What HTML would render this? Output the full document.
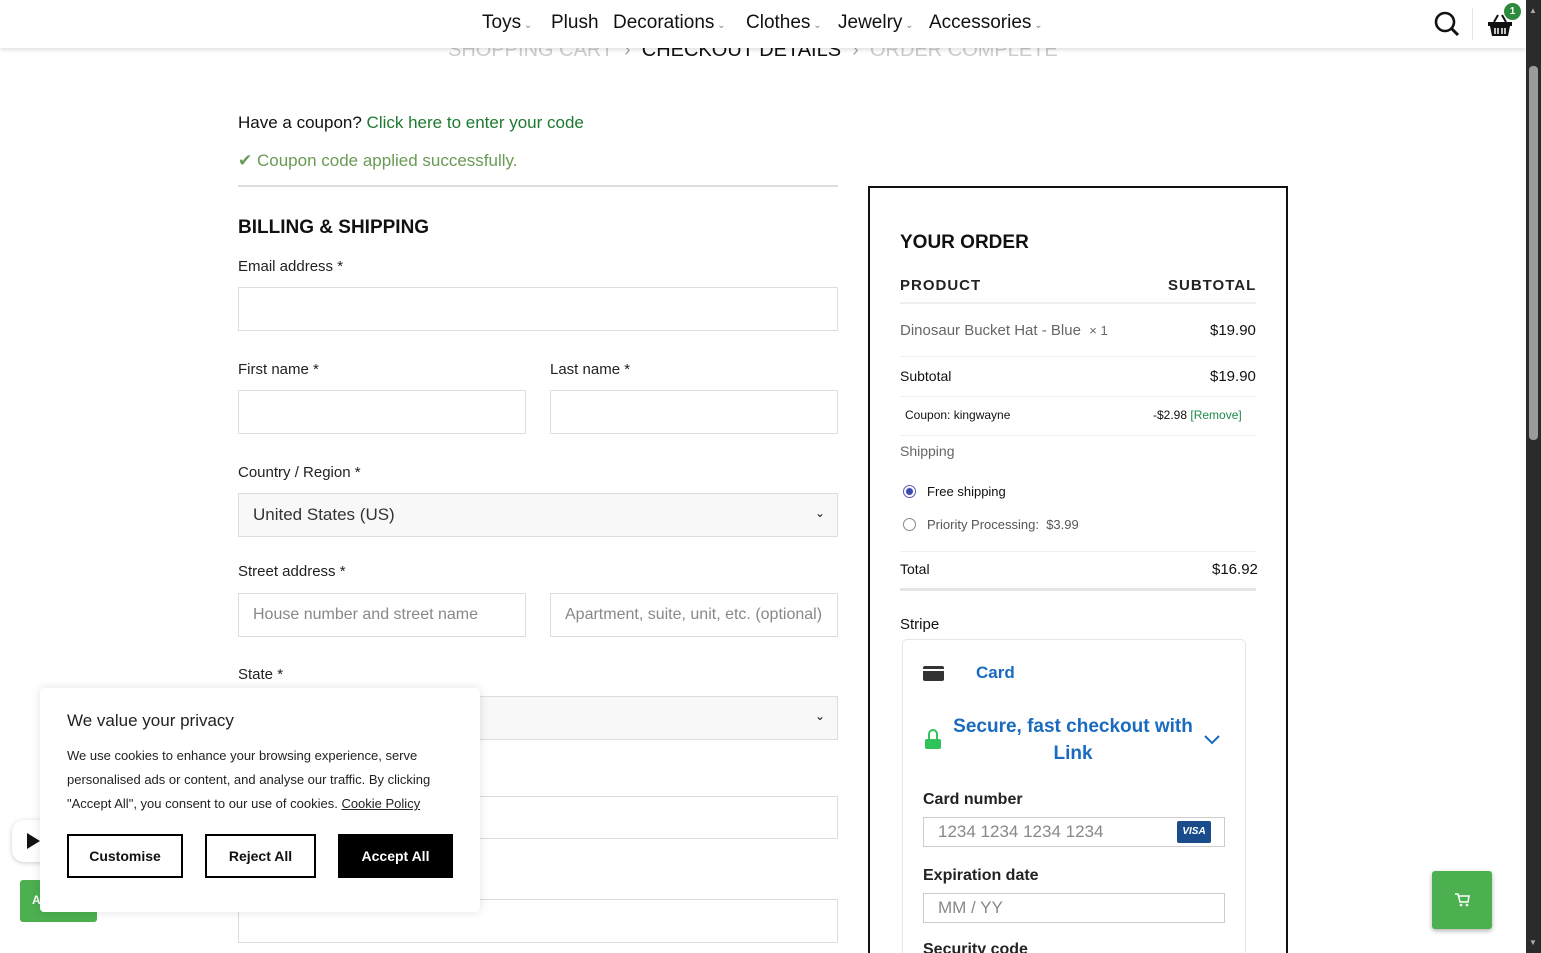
<!DOCTYPE html>
<html style="overflow:hidden;width:1541px;height:953px"><head><meta charset="utf-8"><style>
*{box-sizing:border-box;margin:0;padding:0}
html,body{overflow:hidden}
body{width:1541px;height:953px;overflow:hidden;background:#fff;font-family:"Liberation Sans",sans-serif;color:#111;position:relative}
.a{position:absolute;white-space:nowrap}
.lbl{font-size:15px;color:#222}
.inp{position:absolute;border:1px solid #ddd;background:#fff}
.ph{color:#888;font-size:16px;padding-left:14px;line-height:42px}
.nav{font-size:19px;color:#111}
.car{font-size:10px;color:#888}
.row{position:absolute;left:900px;width:356px;border-bottom:2px solid #eee}
.btn{position:absolute;top:834px;height:44px;border:2px solid #000;font-size:14px;font-weight:bold;text-align:center;line-height:40px}
</style></head><body>
<div class="a" style="left:448px;top:39px;font-size:20px;color:#ccc">SHOPPING CART <span style="color:#aaa">&nbsp;›&nbsp;</span> <span style="color:#111">CHECKOUT DETAILS</span> <span style="color:#aaa">&nbsp;›&nbsp;</span> ORDER COMPLETE</div>
<div class="a" style="left:0;top:0;width:1526px;height:48px;background:#fff;box-shadow:0 2px 4px rgba(0,0,0,.12)"></div>
<div class="a nav" style="left:482px;top:12px">Toys<span class="car"> ⌄</span></div>
<div class="a nav" style="left:551px;top:12px">Plush</div>
<div class="a nav" style="left:613px;top:12px">Decorations<span class="car"> ⌄</span></div>
<div class="a nav" style="left:746px;top:12px">Clothes<span class="car"> ⌄</span></div>
<div class="a nav" style="left:838px;top:12px">Jewelry<span class="car"> ⌄</span></div>
<div class="a nav" style="left:929px;top:12px">Accessories<span class="car"> ⌄</span></div>
<svg class="a" style="left:1433px;top:10px" width="28" height="28" viewBox="0 0 28 28"><circle cx="12" cy="12" r="9" fill="none" stroke="#111" stroke-width="2.6"/><line x1="18.5" y1="18.5" x2="25" y2="25" stroke="#111" stroke-width="3"/></svg>
<div class="a" style="left:1472px;top:8px;width:1px;height:32px;background:#e5e5e5"></div>
<svg class="a" style="left:1487px;top:12px" width="26" height="26" viewBox="0 0 26 26"><path d="M7 10 L11 3 M19 10 L15 3" stroke="#111" stroke-width="2" fill="none"/><rect x="1" y="10" width="24" height="4" fill="#111"/><path d="M3 14 L5 24 H21 L23 14 Z" fill="#111"/><path d="M8 16v6M11 16v6M15 16v6M18 16v6" stroke="#fff" stroke-width="1.5"/></svg>
<div class="a" style="left:1504px;top:3px;width:17px;height:17px;border-radius:50%;background:#2e8b3e;color:#fff;font-size:10px;font-weight:bold;text-align:center;line-height:17px">1</div>
<div class="a" style="left:1526px;top:0;width:15px;height:953px;background:#2b2b2b"></div>
<div class="a" style="left:1529px;top:66px;width:9px;height:374px;background:#9b9b9b;border-radius:4px"></div>
<div class="a" style="left:1529px;top:6px;font-size:8px;color:#aaa">▲</div>
<div class="a" style="left:1529px;top:938px;font-size:8px;color:#aaa">▼</div>
<div class="a" style="left:238px;top:113px;font-size:17px">Have a coupon? <span style="color:#1e7a30">Click here to enter your code</span></div>
<div class="a" style="left:238px;top:151px;font-size:17px;color:#6a9a55">✔ Coupon code applied successfully.</div>
<div class="a" style="left:238px;top:185px;width:600px;height:2px;background:#ddd"></div>
<div class="a" style="left:238px;top:217px;font-size:19px;color:#111;font-weight:bold">BILLING &amp; SHIPPING</div>
<div class="a lbl" style="left:238px;top:258px">Email address *</div>
<div class="inp" style="left:238px;top:287px;width:600px;height:44px"></div>
<div class="a lbl" style="left:238px;top:361px">First name *</div>
<div class="a lbl" style="left:550px;top:361px">Last name *</div>
<div class="inp" style="left:238px;top:390px;width:288px;height:44px"></div>
<div class="inp" style="left:550px;top:390px;width:288px;height:44px"></div>
<div class="a lbl" style="left:238px;top:464px">Country / Region *</div>
<div class="inp" style="left:238px;top:493px;width:600px;height:44px;background:#f8f8f8"><div class="ph" style="color:#333;font-size:17px">United States (US)</div><div class="a" style="right:12px;top:12px;font-size:12px">⌄</div></div>
<div class="a lbl" style="left:238px;top:563px">Street address *</div>
<div class="inp" style="left:238px;top:593px;width:288px;height:44px"><div class="ph">House number and street name</div></div>
<div class="inp" style="left:550px;top:593px;width:288px;height:44px;overflow:hidden"><div class="ph">Apartment, suite, unit, etc. (optional)</div></div>
<div class="a lbl" style="left:238px;top:666px">State *</div>
<div class="inp" style="left:238px;top:696px;width:600px;height:44px;background:#f8f8f8"><div class="a" style="right:12px;top:12px;font-size:12px">⌄</div></div>
<div class="inp" style="left:238px;top:796px;width:600px;height:43px"></div>
<div class="inp" style="left:238px;top:899px;width:600px;height:44px"></div>
<div class="a" style="left:868px;top:186px;width:420px;height:800px;border:2px solid #111"></div>
<div class="a" style="left:900px;top:232px;font-size:19px;font-weight:bold">YOUR ORDER</div>
<div class="a" style="left:900px;top:277px;font-size:15px;letter-spacing:1px;font-weight:bold;color:#222">PRODUCT</div>
<div class="a" style="left:1168px;top:277px;font-size:15px;letter-spacing:1px;font-weight:bold;color:#222">SUBTOTAL</div>
<div class="row" style="top:302px"></div>
<div class="a" style="left:900px;top:322px;font-size:15px;color:#666">Dinosaur Bucket Hat - Blue &nbsp;<span style="font-size:13px">× 1</span></div>
<div class="a" style="left:1210px;top:322px;font-size:15px">$19.90</div>
<div class="row" style="top:356px;height:1px;border-bottom:1px solid #eee"></div>
<div class="a" style="left:900px;top:368px;font-size:14px">Subtotal</div>
<div class="a" style="left:1210px;top:368px;font-size:15px">$19.90</div>
<div class="row" style="top:396px;border-bottom:1px solid #eee"></div>
<div class="a" style="left:905px;top:408px;font-size:12px">Coupon: kingwayne</div>
<div class="a" style="left:1153px;top:408px;font-size:12px">-$2.98 <span style="color:#1e8a4a">[Remove]</span></div>
<div class="row" style="top:435px;border-bottom:1px solid #eee"></div>
<div class="a" style="left:900px;top:443px;font-size:14px;color:#666">Shipping</div>
<div class="a" style="left:903px;top:485px;width:13px;height:13px;border-radius:50%;border:1px solid #5a5ab0;background:radial-gradient(#3b48b0 3px,#fff 4px)"></div>
<div class="a" style="left:927px;top:484px;font-size:13px">Free shipping</div>
<div class="a" style="left:903px;top:518px;width:13px;height:13px;border-radius:50%;border:1px solid #888"></div>
<div class="a" style="left:927px;top:517px;font-size:13px;color:#555">Priority Processing: &nbsp;$3.99</div>
<div class="row" style="top:551px;border-bottom:1px solid #eee"></div>
<div class="a" style="left:900px;top:561px;font-size:14px">Total</div>
<div class="a" style="left:1212px;top:561px;font-size:15px">$16.92</div>
<div class="row" style="top:588px;border-bottom:3px solid #e5e5e5"></div>
<div class="a" style="left:900px;top:616px;font-size:15px">Stripe</div>
<div class="a" style="left:902px;top:639px;width:344px;height:330px;border:1px solid #e6e6e6;border-radius:5px"></div>
<div class="a" style="left:923px;top:666px;width:21px;height:15px;background:#333;border-radius:2px"><div style="margin-top:3px;height:2px;background:#fff"></div></div>
<div class="a" style="left:976px;top:663px;font-size:17px;font-weight:bold;color:#1a6bc0">Card</div>
<div class="a" style="left:925px;top:729px;width:16px;height:19px"><div style="width:10px;height:10px;margin-left:3px;border:2.5px solid #2fc35a;border-bottom:none;border-radius:5px 5px 0 0"></div><div style="width:16px;height:10px;background:#2fc35a;border-radius:2px"></div></div>
<div class="a" style="left:940px;top:713px;width:266px;text-align:center;font-size:19px;font-weight:bold;color:#1a6bc0;line-height:27px;white-space:normal">Secure, fast checkout with Link</div>
<svg class="a" style="left:1203px;top:733px" width="18" height="12" viewBox="0 0 18 12"><path d="M2 3 L9 10 L16 3" stroke="#1a6bc0" stroke-width="2" fill="none"/></svg>
<div class="a" style="left:923px;top:791px;font-size:16px;font-weight:bold;color:#222">Card number</div>
<div class="inp" style="left:923px;top:817px;width:302px;height:30px;border-color:#ccc"><div style="color:#888;font-size:17px;padding-left:14px;line-height:28px">1234 1234 1234 1234</div><div class="a" style="left:253px;top:3px;width:34px;height:22px;background:#1a4c8c;color:#fff;font-size:10px;font-weight:bold;font-style:italic;text-align:center;line-height:22px;border-radius:2px">VISA</div></div>
<div class="a" style="left:923px;top:867px;font-size:16px;font-weight:bold;color:#222">Expiration date</div>
<div class="inp" style="left:923px;top:893px;width:302px;height:30px;border-color:#ccc"><div style="color:#888;font-size:17px;padding-left:14px;line-height:28px">MM / YY</div></div>
<div class="a" style="left:923px;top:941px;font-size:16px;font-weight:bold;color:#222">Security code</div>
<div class="a" style="left:1432px;top:871px;width:60px;height:58px;background:#4caf50;border-radius:3px;box-shadow:0 2px 5px rgba(0,0,0,.3)"><svg style="position:absolute;left:22px;top:21px" width="16" height="16" viewBox="0 0 16 16"><path d="M1 2h3l2 8h8l1-6H5" stroke="#fff" stroke-width="1.5" fill="none"/><circle cx="7" cy="13" r="1.3" fill="#fff"/><circle cx="13" cy="13" r="1.3" fill="#fff"/></svg></div>
<div class="a" style="left:12px;top:820px;width:40px;height:42px;background:#fff;border-radius:12px;box-shadow:0 1px 5px rgba(0,0,0,.2)"><div style="margin:13px 0 0 15px;width:0;height:0;border-left:13px solid #111;border-top:8px solid transparent;border-bottom:8px solid transparent"></div></div>
<div class="a" style="left:20px;top:880px;width:77px;height:42px;background:#4caf50;border-radius:3px;color:#fff;font-size:12px;font-weight:bold;padding:13px 12px">A</div>
<div class="a" style="left:40px;top:688px;width:440px;height:224px;background:#fff;border-radius:4px;box-shadow:0 0 10px rgba(0,0,0,.12)"></div>
<div class="a" style="left:67px;top:711px;font-size:17px;color:#222">We value your privacy</div>
<div class="a" style="left:67px;top:744px;font-size:13px;line-height:24px;color:#222">We use cookies to enhance your browsing experience, serve<br>personalised ads or content, and analyse our traffic. By clicking<br>"Accept All", you consent to our use of cookies. <u>Cookie Policy</u></div>
<div class="btn" style="left:67px;width:116px;background:#fff">Customise</div>
<div class="btn" style="left:205px;width:111px;background:#fff">Reject All</div>
<div class="btn" style="left:338px;width:115px;background:#000;color:#fff">Accept All</div>
</body></html>
